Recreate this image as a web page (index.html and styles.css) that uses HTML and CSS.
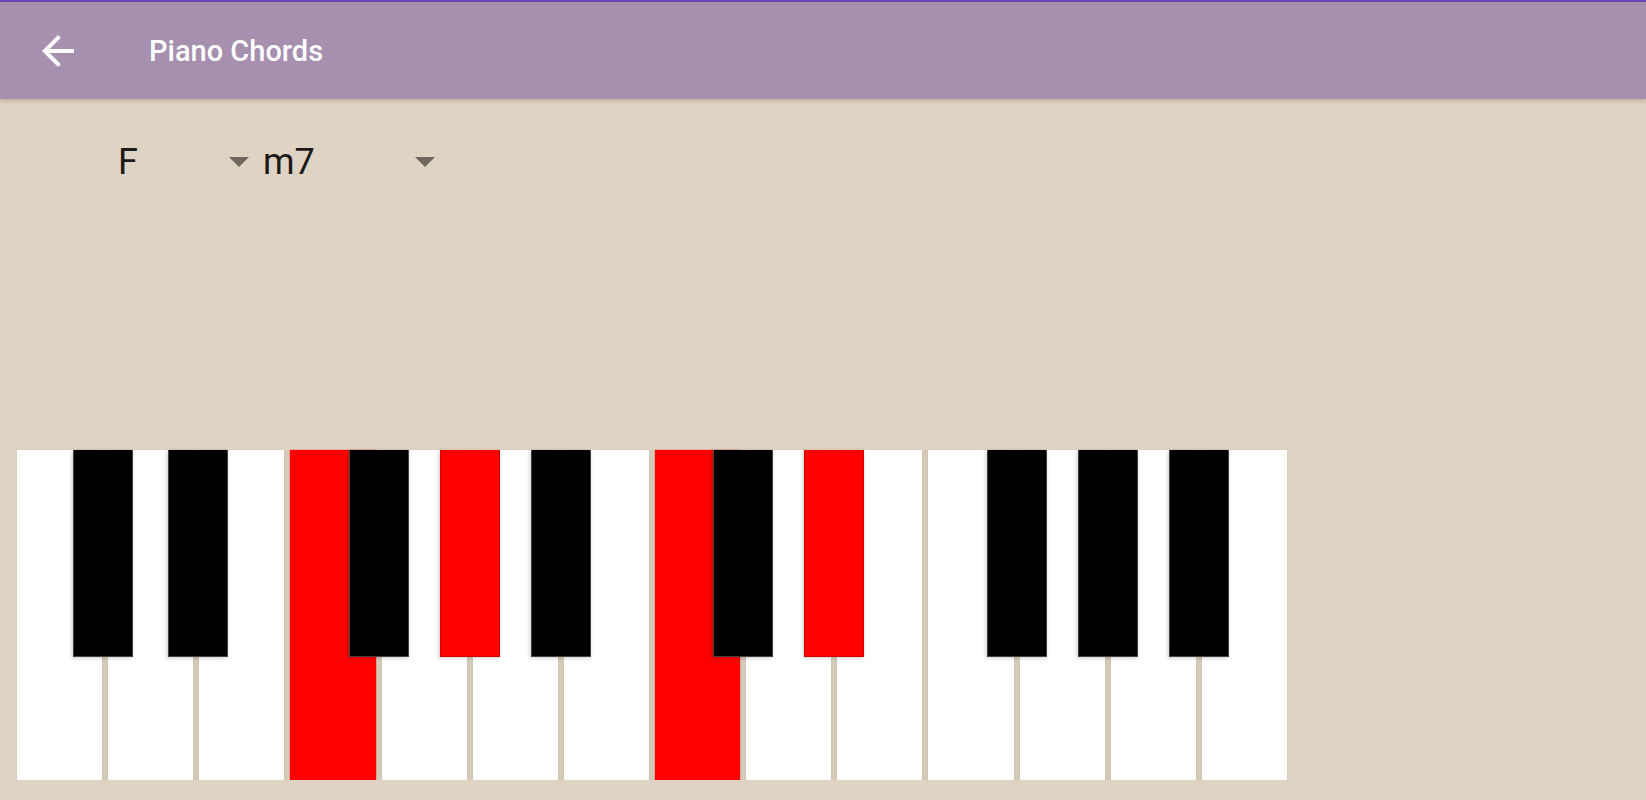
FILE: index.html
```html
<!DOCTYPE html>
<html lang="en">
<head>
    <meta charset="UTF-8">
    <meta name="viewport" content="width=device-width, initial-scale=1.0">
    <title>Piano Chords</title>
<link rel="stylesheet" href="styles.css">
</head>
<body>
<div class="bar">
    <svg class="back" viewBox="0 0 24 24"><path d="M20 11H7.83l5.59-5.59L12 4l-8 8 8 8 1.41-1.41L7.83 13H20v-2z"/></svg>
    <div class="title">Piano Chords</div>
</div>
<div class="chords">
    <div class="spin root"><span class="val">F</span><span class="caret"></span></div>
    <div class="spin kind"><span class="val">m7</span><span class="caret"></span></div>
</div>
<div class="piano">
    <!-- C D E | F G A B | C D E | F G A B -->
    <div class="wk"><div class="bk lft"></div></div>
    <div class="wk"><div class="bk rgt"></div></div>
    <div class="wk"></div>
    <div class="wk on"><div class="bk"></div></div>
    <div class="wk"><div class="bk on"></div></div>
    <div class="wk"><div class="bk"></div></div>
    <div class="wk"></div>
    <div class="wk on"><div class="bk"></div></div>
    <div class="wk"><div class="bk on"></div></div>
    <div class="wk"></div>
    <div class="wk"><div class="bk"></div></div>
    <div class="wk"><div class="bk"></div></div>
    <div class="wk"><div class="bk"></div></div>
    <div class="wk"></div>
</div>
</body>
</html>
```
FILE: styles.css
```css
html,body{margin:0;}
body{background:#dfd3c3;font-family:Roboto,"Liberation Sans",sans-serif;}
.bar{height:97px;border-top:2px solid #6c47b6;background:#a68faf;display:flex;align-items:center;padding-left:34px;
box-shadow:0 2px 4px rgba(0,0,0,.18);position:relative;z-index:3;}
.back{width:48px;height:48px;fill:#fff;}
.title{color:#fff;font-size:29px;font-weight:500;margin-left:67px;}
.chords{display:flex;padding:39px 0 0 112px;}
.spin{display:flex;align-items:center;height:48px;padding:0 8px 0 6px;box-sizing:border-box;}
.root{width:145px;}
.kind{width:186px;}
.val{flex:1;font-size:36px;line-height:48px;color:#1c1a18;}
.caret{width:0;height:0;border-left:10px solid transparent;border-right:10px solid transparent;border-top:10px solid #6d675f;}
.piano{display:flex;gap:6px;width:1270px;height:330px;margin:264px 0 0 17px;background:#d5c9b9;}
.wk{flex:1;background:#fff;position:relative;box-shadow:0 0 1px rgba(0,0,0,.12);}
.bk{position:absolute;top:0;right:-33px;width:60px;height:207px;background:#000;z-index:2;box-sizing:border-box;
border:1px solid #444;border-top:0;box-shadow:-1px 1px 4px rgba(0,0,0,.22);}
.bk.lft{right:-31px;}
.bk.rgt{right:-35px;}
.wk.on,.bk.on{background:#f00;}
.wk.on{box-shadow:0 0 1px #c00;}
.bk.on{border-color:#d00000;}
```
